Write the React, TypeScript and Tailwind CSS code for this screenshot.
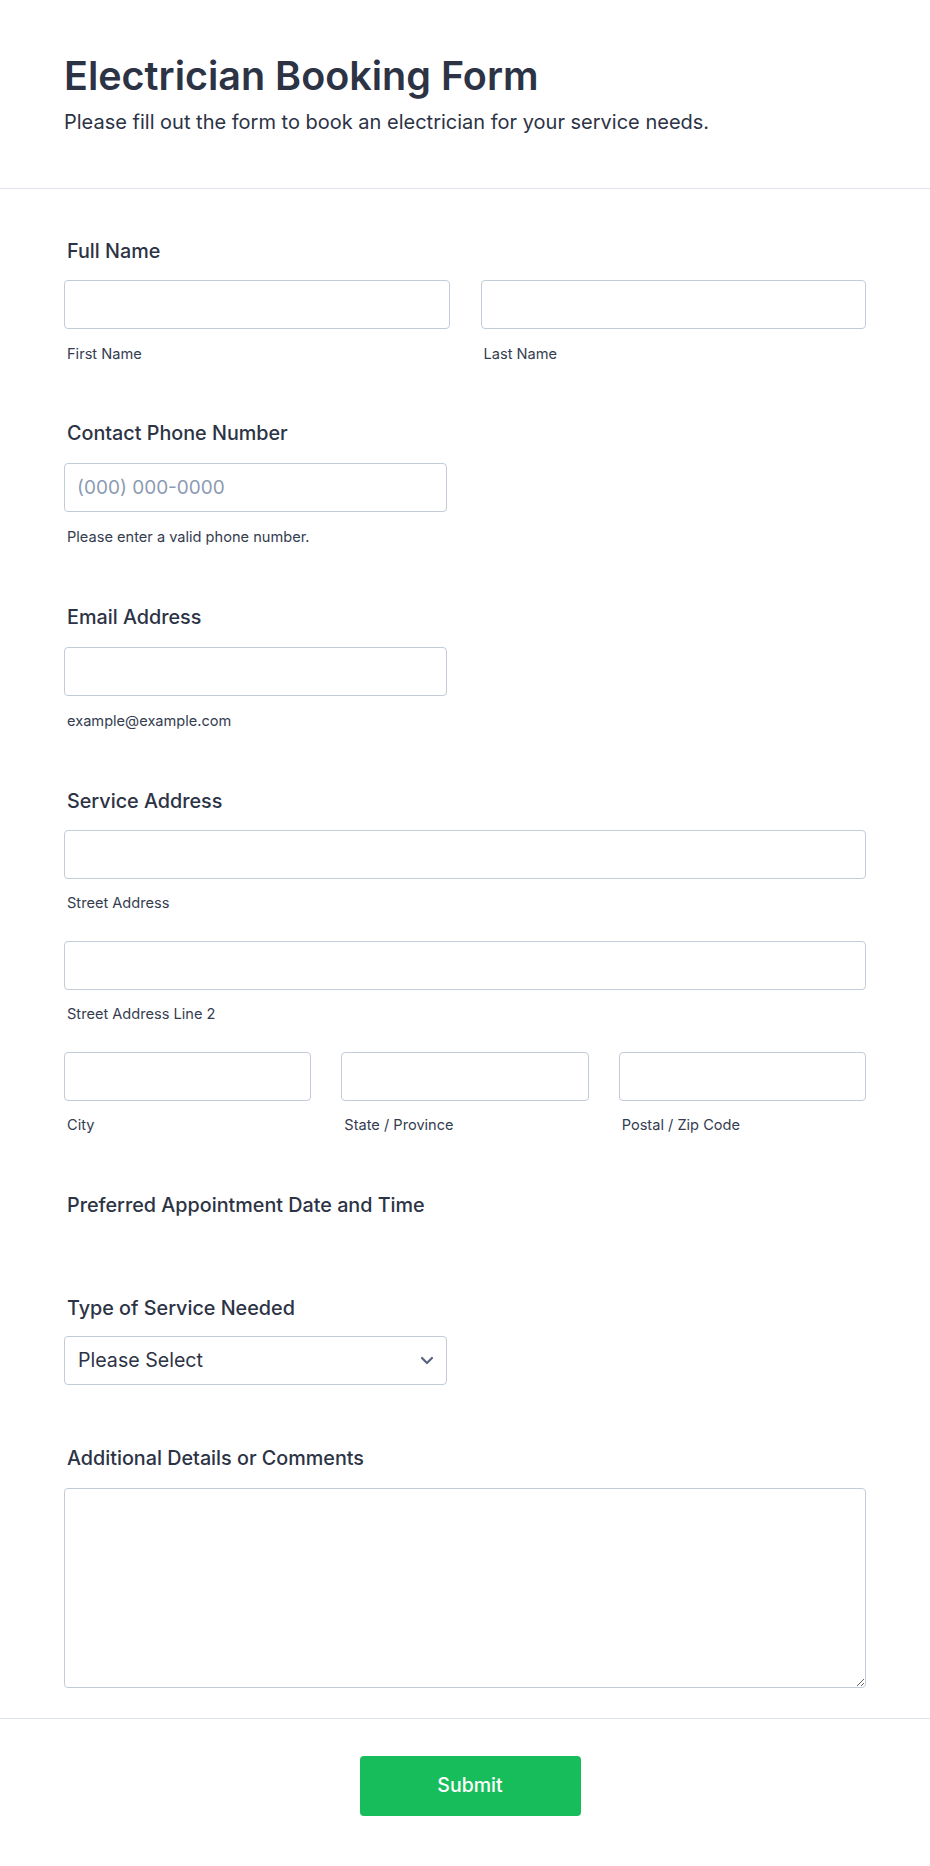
import React from "react";

const labelCls = "block pl-[3px] text-[19.75px] leading-[28px] font-medium text-[#2c3345]";
const subCls = "block pl-[3px] text-[14.6px] leading-[20px] text-[#343c50]";
const inputCls = "block h-[49px] w-full rounded-[4px] border border-[#c3cad8] bg-white px-3 text-[19px] text-[#2c3345] outline-none placeholder:text-[#8c9bb3]";

function Field({ label, children }: { label: string; children?: React.ReactNode }) {
  return (
    <div>
      <label className={labelCls}>{label}</label>
      {children}
    </div>
  );
}

export default function App() {
  return (
    <div className="min-h-[1866px] w-full bg-white font-['Inter','Noto_Sans',sans-serif] text-[#2c3345]">
      <header className="border-b border-[#dfe3ee] px-16 pt-[52px] pb-[52px]">
        <h1 className="text-[39.5px] leading-[48px] font-semibold text-[#2c3345]">Electrician Booking Form</h1>
        <p className="mt-2 text-[20px] leading-[28px] text-[#2c3345]">
          Please fill out the form to book an electrician for your service needs.
        </p>
      </header>

      <main className="px-16 pt-[48px]">
        <Field label="Full Name">
          <div className="mt-[15px] grid grid-cols-2 gap-x-[31px]">
            <div>
              <input className={inputCls} />
              <span className={subCls + " mt-[15px]"}>First Name</span>
            </div>
            <div>
              <input className={inputCls} />
              <span className={subCls + " mt-[15px]"}>Last Name</span>
            </div>
          </div>
        </Field>

        <div className="mt-[55px]">
          <Field label="Contact Phone Number">
            <div className="mt-[16px] w-[383px]">
              <input className={inputCls} placeholder="(000) 000-0000" />
            </div>
            <span className={subCls + " mt-[15px]"}>Please enter a valid phone number.</span>
          </Field>
        </div>

        <div className="mt-[56px]">
          <Field label="Email Address">
            <div className="mt-[16px] w-[383px]">
              <input className={inputCls} />
            </div>
            <span className={subCls + " mt-[15px]"}>example@example.com</span>
          </Field>
        </div>

        <div className="mt-[56px]">
          <Field label="Service Address">
            <input className={inputCls + " mt-[15px]"} />
            <span className={subCls + " mt-[14px]"}>Street Address</span>
            <input className={inputCls + " mt-[28px]"} />
            <span className={subCls + " mt-[14px]"}>Street Address Line 2</span>
            <div className="mt-[28px] grid grid-cols-3 gap-x-[30px]">
              <div>
                <input className={inputCls} />
                <span className={subCls + " mt-[14px]"}>City</span>
              </div>
              <div>
                <input className={inputCls} />
                <span className={subCls + " mt-[14px]"}>State / Province</span>
              </div>
              <div>
                <input className={inputCls} />
                <span className={subCls + " mt-[14px]"}>Postal / Zip Code</span>
              </div>
            </div>
          </Field>
        </div>

        <div className="mt-[56px]">
          <Field label="Preferred Appointment Date and Time" />
        </div>

        <div className="mt-[75px]">
          <Field label="Type of Service Needed">
            <div className="mt-[14px] flex h-[49px] w-[383px] items-center justify-between rounded-[4px] border border-[#c3cad8] bg-white pl-[13px] pr-[12px]">
              <span className="text-[19.6px] text-[#2c3345]">Please Select</span>
              <svg width="14" height="9" viewBox="0 0 14 9" fill="none" aria-hidden="true">
                <path d="M2 2L7 7L12 2" stroke="#57647e" strokeWidth="2.2" strokeLinecap="round" strokeLinejoin="round" />
              </svg>
            </div>
          </Field>
        </div>

        <div className="mt-[59px]">
          <Field label="Additional Details or Comments">
            <textarea className="mt-[16px] block h-[200px] w-full rounded-[4px] border border-[#c3cad8] bg-white p-3 text-[18px] text-[#2c3345] outline-none" />
          </Field>
        </div>
      </main>

      <div className="mt-[30px] flex justify-center border-t border-[#dfe3ee] pl-[10px] pt-[37px] pb-[49px]">
        <button className="h-[60px] w-[221px] rounded-[4px] bg-[#18bd5b] text-[19.5px] font-medium text-white">
          Submit
        </button>
      </div>
    </div>
  );
}
